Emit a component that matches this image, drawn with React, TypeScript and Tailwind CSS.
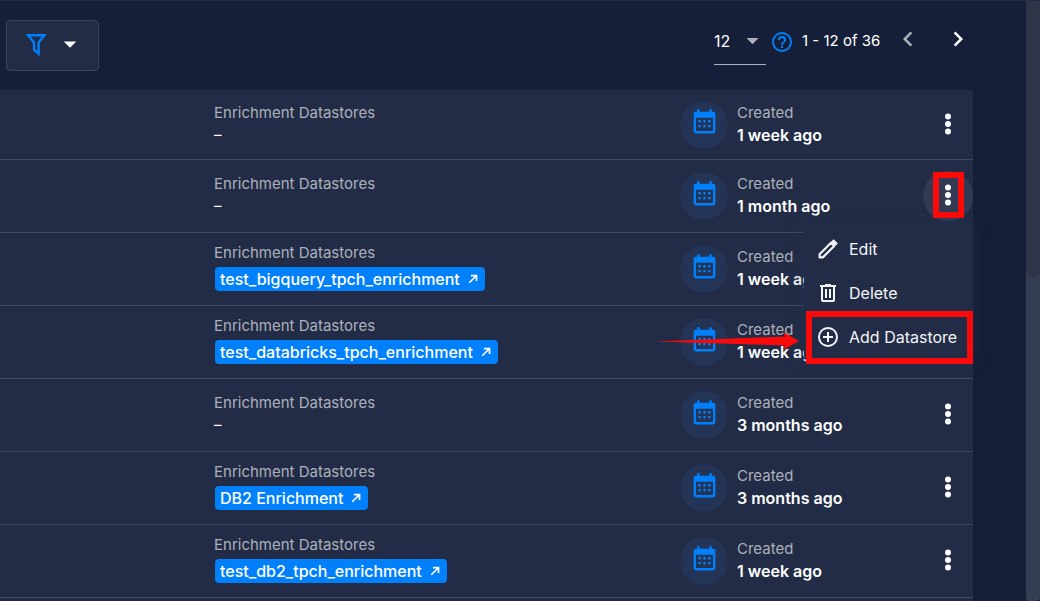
import React from 'react';

type Row = { pill?: string; created: string };

const rows: Row[] = [
  { created: '1 week ago' },
  { created: '1 month ago' },
  { pill: 'test_bigquery_tpch_enrichment', created: '1 week ago' },
  { pill: 'test_databricks_tpch_enrichment', created: '1 week ago' },
  { created: '3 months ago' },
  { pill: 'DB2 Enrichment', created: '3 months ago' },
  { pill: 'test_db2_tpch_enrichment', created: '1 week ago' },
];

function Icon({ d, className }: { d: string; className: string }) {
  return (
    <svg viewBox="0 0 24 24" fill="currentColor" aria-hidden="true" className={className}>
      <path d={d} />
    </svg>
  );
}

const paths = {
  calendar:
    'M9,10V12H7V10H9M13,10V12H11V10H13M17,10V12H15V10H17M19,3A2,2 0 0,1 21,5V19A2,2 0 0,1 19,21H5C3.89,21 3,20.1 3,19V5A2,2 0 0,1 5,3H6V1H8V3H16V1H18V3H19M19,19V8H5V19H19M9,14V16H7V14H9M13,14V16H11V14H13M17,14V16H15V14H17',
  dots: 'M12,15.6A2.4,2.4 0 0,1 12,20.4A2.4,2.4 0 0,1 12,15.6M12,9.6A2.4,2.4 0 0,1 12,14.4A2.4,2.4 0 0,1 12,9.6M12,3.6A2.4,2.4 0 0,1 12,8.4A2.4,2.4 0 0,1 12,3.6Z',
  down: 'M7,10L12,15L17,10H7Z',
  left: 'M15.41,16.58L10.83,12L15.41,7.41L14,6L8,12L14,18L15.41,16.58Z',
  right: 'M8.59,16.58L13.17,12L8.59,7.41L10,6L16,12L10,18L8.59,16.58Z',
  help: 'M11,18H13V16H11V18M12,2A10,10 0 0,0 2,12A10,10 0 0,0 12,22A10,10 0 0,0 22,12A10,10 0 0,0 12,2M12,20C7.59,20 4,16.41 4,12C4,7.59 7.59,4 12,4C16.41,4 20,7.59 20,12C20,16.41 16.41,20 12,20M12,6A4,4 0 0,0 8,10H10A2,2 0 0,1 12,8A2,2 0 0,1 14,10C14,12 11,11.75 11,15H13C13,12.75 16,12.5 16,10A4,4 0 0,0 12,6Z',
  trash:
    'M9,3V4H4V6H5V19A2,2 0 0,0 7,21H17A2,2 0 0,0 19,19V6H20V4H15V3H9M7,6H17V19H7V6M9,8V17H11V8H9M13,8V17H15V8H13Z',
  plus: 'M12,20C7.59,20 4,16.41 4,12C4,7.59 7.59,4 12,4C16.41,4 20,7.59 20,12C20,16.41 16.41,20 12,20M12,2A10,10 0 0,0 2,12A10,10 0 0,0 12,22A10,10 0 0,0 22,12A10,10 0 0,0 12,2M13,7H11V11H7V13H11V17H13V13H17V11H13V7Z',
  arrow: 'M4.6,17.5L14.6,7.5H8.5V4.5H19.5V15.5H16.5V9.4L6.5,19.4L4.6,17.5Z',
};

function PencilIcon() {
  return (
    <svg viewBox="0 0 24 24" fill="none" stroke="currentColor" aria-hidden="true" className="size-6 shrink-0">
      <path d="M3.6 20.4V17.2L15 5.8L18.2 9L6.8 20.4Z" strokeWidth="2.2" strokeLinejoin="round" />
      <path d="M15.6 4.7L17.6 2.7L21.3 6.4L19.3 8.4Z" fill="currentColor" strokeWidth="1" strokeLinejoin="round" />
    </svg>
  );
}

function Toolbar() {
  return (
    <header className="flex h-[90px] items-start justify-between pl-1.5 pt-5">
      <button
        aria-label="Filter"
        className="flex h-[51px] w-[93px] items-center rounded border border-[#3b445c] bg-[#222c46] pb-1 pl-[17px]"
      >
        <svg viewBox="0 0 24 24" fill="none" stroke="#0080fb" strokeWidth="2.4" aria-hidden="true" className="size-6">
          <path d="M4 3.2H20.4L14.6 10.4V21.6L10 17.6V10.4Z" />
        </svg>
        <Icon d={paths.down} className="ml-[7px] size-[30px] text-white" />
      </button>
      <div className="flex items-start">
        <div className="relative flex w-[52px] border-b border-[#aeb2bd]">
          <select
            aria-label="Items per page"
            defaultValue="12"
            className="h-11 w-full appearance-none bg-transparent pb-0.5 text-white outline-none"
          >
            <option>12</option>
          </select>
          <span className="pointer-events-none absolute -right-px top-1.5 text-[#aeb2bd]">
            <Icon d={paths.down} className="size-[29px]" />
          </span>
        </div>
        <Icon d={paths.help} className="ml-1 mt-2.5 size-6 text-[#0080fb]" />
        <span className="ml-2 mt-[9px] w-[79px] whitespace-nowrap text-[15px] leading-6">1 - 12 of 36</span>
        <button aria-label="Previous page" className="ml-3 mt-1 text-[#aeb2bd]">
          <Icon d={paths.left} className="size-[30px]" />
        </button>
        <button aria-label="Next page" className="ml-5 mt-1 text-white">
          <Icon d={paths.right} className="size-[30px]" />
        </button>
      </div>
    </header>
  );
}

function Menu() {
  const items = [
    { label: 'Edit', icon: <PencilIcon /> },
    { label: 'Delete', icon: <Icon d={paths.trash} className="size-6 shrink-0" /> },
    { label: 'Add Datastore', icon: <Icon d={paths.plus} className="size-6 shrink-0" /> },
  ];
  return (
    <div
      role="menu"
      className="absolute right-0 top-[66px] z-10 w-[169px] rounded bg-[#222c46] pt-px shadow-[0_2px_16px_#22335580]"
    >
      {items.map((item) => (
        <button
          key={item.label}
          role="menuitem"
          className="flex h-11 w-full items-center gap-[9px] whitespace-nowrap pl-3 text-base text-[#f4f5f7]"
        >
          {item.icon}
          {item.label}
        </button>
      ))}
      <div className="pointer-events-none absolute left-0.5 right-0 top-[85px] h-[53px] border-[6px] border-[#fa0b09]" />
      <svg
        viewBox="0 0 144 22"
        aria-hidden="true"
        className="pointer-events-none absolute -left-[149px] top-[105px] h-[22px] w-36"
      >
        <path d="M0 10.5L130 5.5L128 1L144 10L128 19L130 14.5Z" fill="#fa0b09" />
      </svg>
    </div>
  );
}

function DatastoreRow({ row, active }: { row: Row; active: boolean }) {
  return (
    <li className="relative flex h-[73px] items-center border-b border-[#414a61] first:h-[70px]">
      <div className="flex-1 pl-[214px]">
        {row.pill ? (
          <>
            <p className="text-[15px] leading-[22px] text-[#adb1bb]">Enrichment Datastores</p>
            <a
              href="#"
              className="mb-[5px] ml-px mt-[3px] flex h-6 w-fit items-center gap-1.5 rounded bg-[#0080fb] px-[5px] text-base font-medium text-white"
            >
              {row.pill}
              <Icon d={paths.arrow} className="size-3.5" />
            </a>
          </>
        ) : (
          <div className="pb-0.5">
            <p className="text-[15px] leading-[22px] text-[#adb1bb]">Enrichment Datastores</p>
            <p className="text-[15px] leading-[22px]">–</p>
          </div>
        )}
      </div>
      <div className="flex w-[243px] shrink-0 items-center">
        <span className="flex size-12 items-center justify-center rounded-full bg-[#233456] pb-1 text-[#0080fb]">
          <Icon d={paths.calendar} className="size-[29px]" />
        </span>
        <div className="ml-[9px] pb-0.5">
          <p className="text-[15px] leading-[22px] text-[#adb1bb]">Created</p>
          <p className="text-base font-semibold leading-[22px]">{row.created}</p>
        </div>
      </div>
      <button
        aria-label="Row actions"
        className={`relative flex size-[50px] shrink-0 items-center justify-center rounded-full pb-0.5 text-white ${active ? 'bg-[#323b53]' : ''}`}
      >
        <Icon d={paths.dots} className="size-[30px]" />
        {active && <span className="absolute left-2.5 top-px h-[46px] w-[31px] border-[6px] border-[#fa0b09]" />}
      </button>
      {active && <Menu />}
    </li>
  );
}

export default function App() {
  return (
    <div className="flex h-screen overflow-hidden border-t border-[#222c46] bg-[#161f39] font-['Inter',sans-serif] text-base text-white">
      <main className="-mt-px min-w-0 flex-1 pr-[53px]">
        <Toolbar />
        <ul className="bg-[#222c46]">
          {rows.map((row, i) => (
            <DatastoreRow key={i} row={row} active={i === 1} />
          ))}
          <li className="h-10" />
        </ul>
      </main>
      <div className="-mt-px w-3.5 shrink-0 rounded-b bg-[#353d52]">
        <div className="h-[277px] rounded-b-lg bg-[#2f3547]" />
      </div>
    </div>
  );
}
